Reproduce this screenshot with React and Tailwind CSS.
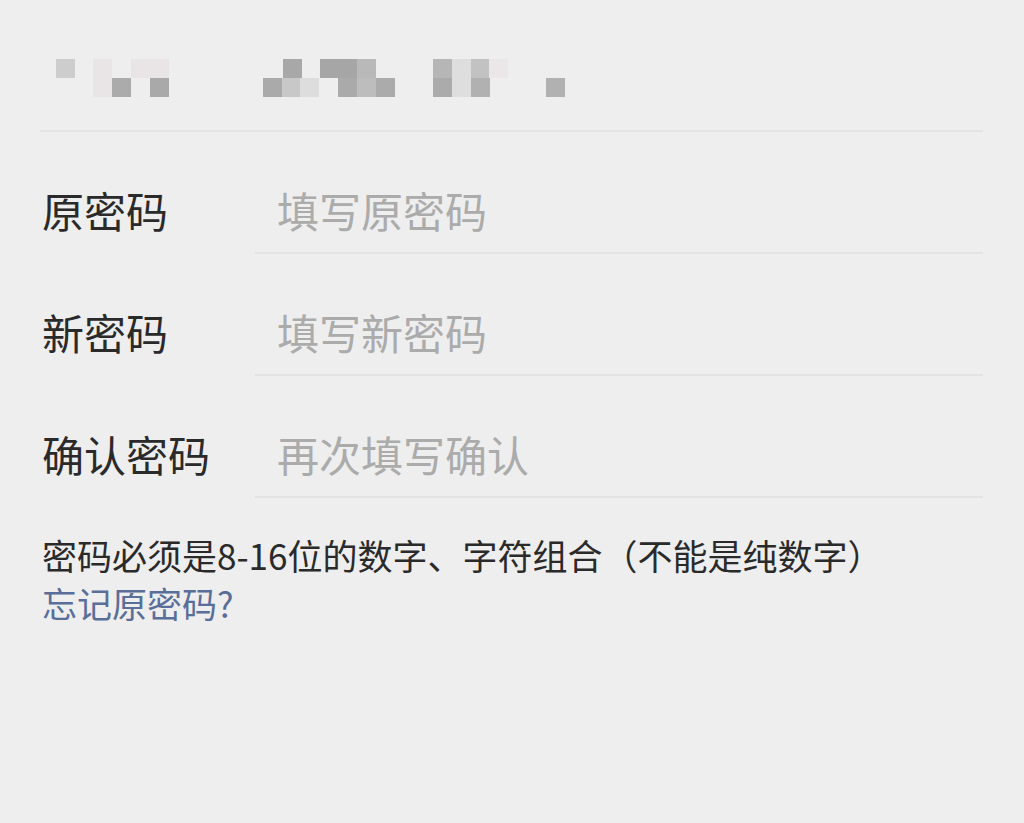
const MOSAIC = [
  // row 1
  [56, 59, '#cdcdcd'],
  [93, 59, '#e9e5e7'],
  [131, 59, '#e9e5e7'],
  [150, 59, '#e9e5e7'],
  [283, 59, '#a8a8a8'],
  [320, 59, '#a6a6a6'],
  [338, 59, '#a6a6a6'],
  [357, 59, '#b9b9b9'],
  [433, 59, '#b6b6b6'],
  [452, 59, '#dedede'],
  [471, 59, '#c2c2c2'],
  [489, 59, '#ebe7e9'],
  // row 2
  [93, 78, '#e9e5e7'],
  [112, 78, '#ababab'],
  [150, 78, '#a9a9a9'],
  [263, 78, '#aaaaaa'],
  [282, 78, '#c8c8c8'],
  [300, 78, '#dddddd'],
  [338, 78, '#aaaaaa'],
  [357, 78, '#bdbdbd'],
  [376, 78, '#ababab'],
  [433, 78, '#ababab'],
  [452, 78, '#dedede'],
  [471, 78, '#b1b1b1'],
  [546, 78, '#b1b1b1'],
];

const FIELDS = [
  { label: '原密码', placeholder: '填写原密码' },
  { label: '新密码', placeholder: '填写新密码' },
  { label: '确认密码', placeholder: '再次填写确认' },
];

const font = { fontFamily: '"Noto Sans CJK SC", "Noto Sans", sans-serif' };

export default function App() {
  return (
    <div className="min-h-[823px] w-[1024px] bg-[#eeeeee] pl-[40px] pr-[41px]" style={font}>
      {/* Header (blurred account name) */}
      <div className="h-[132px] border-b-2 border-[#e3e3e3]">
        <svg width="943" height="130" viewBox="40 0 943 130">
          {MOSAIC.map(([x, y, c], i) => (
            <rect key={i} x={x} y={y} width="19" height="19" fill={c} />
          ))}
        </svg>
      </div>

      {/* Fields */}
      {FIELDS.map((f) => (
        <div key={f.label} className="flex h-[122px]">
          <div className="w-[215px] flex items-center pt-[34px] pl-[2px] text-[42px] text-[#2a2a2a] leading-none">
            {f.label}
          </div>
          <div className="flex-1 flex items-center pt-[34px] border-b-2 border-[#e3e3e3]">
            <input
              type="password"
              placeholder={f.placeholder}
              className="w-full pl-[22px] bg-transparent outline-none text-[42px] leading-none text-[#2a2a2a] placeholder:text-[#ababab]"
              style={font}
            />
          </div>
        </div>
      ))}

      {/* Hint */}
      <div className="mt-[33px] pl-[2px] text-[35px] leading-[48px]">
        <p className="text-[#2a2a2a]">密码必须是8-16位的数字、字符组合（不能是纯数字）</p>
        <a href="#" className="text-[#5a6e9a]">忘记原密码?</a>
      </div>
    </div>
  );
}
